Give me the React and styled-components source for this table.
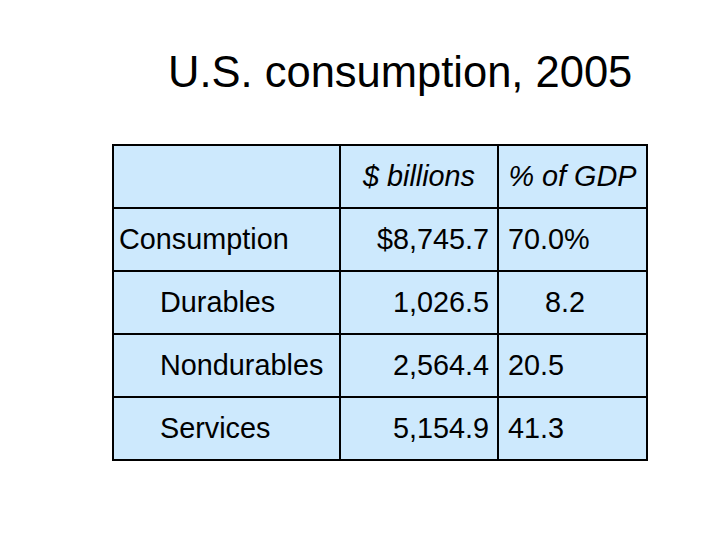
import React from "react";
import styled, { createGlobalStyle } from "styled-components";

const Global = createGlobalStyle`
  html, body { margin: 0; padding: 0; background: #ffffff; }
  body { font-family: "Liberation Sans", Arial, sans-serif; }
`;

const Slide = styled.div`
  width: 720px;
  height: 540px;
  background: #ffffff;
  display: flex;
  flex-direction: column;
  box-sizing: border-box;
  padding: 51px 0 0 112px;
`;

const Title = styled.h1`
  margin: 0 0 0 56px;
  height: 44px;
  font-family: "Liberation Sans", Arial, sans-serif;
  font-weight: normal;
  font-size: 43.5px;
  line-height: 43.5px;
  color: #000000;
  white-space: nowrap;
`;

const Grid = styled.div`
  margin-top: 49px;
  display: grid;
  grid-template-columns: 225px 156px 147px;
  grid-auto-rows: 61px;
  gap: 2px;
  padding: 2px;
  background: #000000;
  width: max-content;
`;

const Cell = styled.div`
  background: #cde9fd;
  display: flex;
  align-items: center;
  justify-content: ${(p) =>
    p.$align === "right" ? "flex-end" : p.$align === "center" ? "center" : "flex-start"};
  padding-left: ${(p) => p.$pl || 0}px;
  padding-right: ${(p) => p.$pr || 0}px;
  font-family: "Liberation Sans", Arial, sans-serif;
  font-size: 28.8px;
  font-style: ${(p) => (p.$italic ? "italic" : "normal")};
  color: #000000;
  white-space: nowrap;
  box-sizing: border-box;
`;

const rows = [
  { label: "Consumption", indent: 5, value: "$8,745.7", pct: "70.0%", pctPad: 9 },
  { label: "Durables", indent: 46, value: "1,026.5", pct: "8.2", pctPad: 46 },
  { label: "Nondurables", indent: 46, value: "2,564.4", pct: "20.5", pctPad: 9 },
  { label: "Services", indent: 46, value: "5,154.9", pct: "41.3", pctPad: 9 },
];

export default function App() {
  return (
    <>
      <Global />
      <Slide>
        <Title>U.S. consumption, 2005</Title>
        <Grid>
          <Cell />
          <Cell $align="center" $italic>$ billions</Cell>
          <Cell $align="center" $italic>% of GDP</Cell>
          {rows.map((r) => (
            <React.Fragment key={r.label}>
              <Cell $pl={r.indent}>{r.label}</Cell>
              <Cell $align="right" $pr={8}>{r.value}</Cell>
              <Cell $pl={r.pctPad}>{r.pct}</Cell>
            </React.Fragment>
          ))}
        </Grid>
      </Slide>
    </>
  );
}
